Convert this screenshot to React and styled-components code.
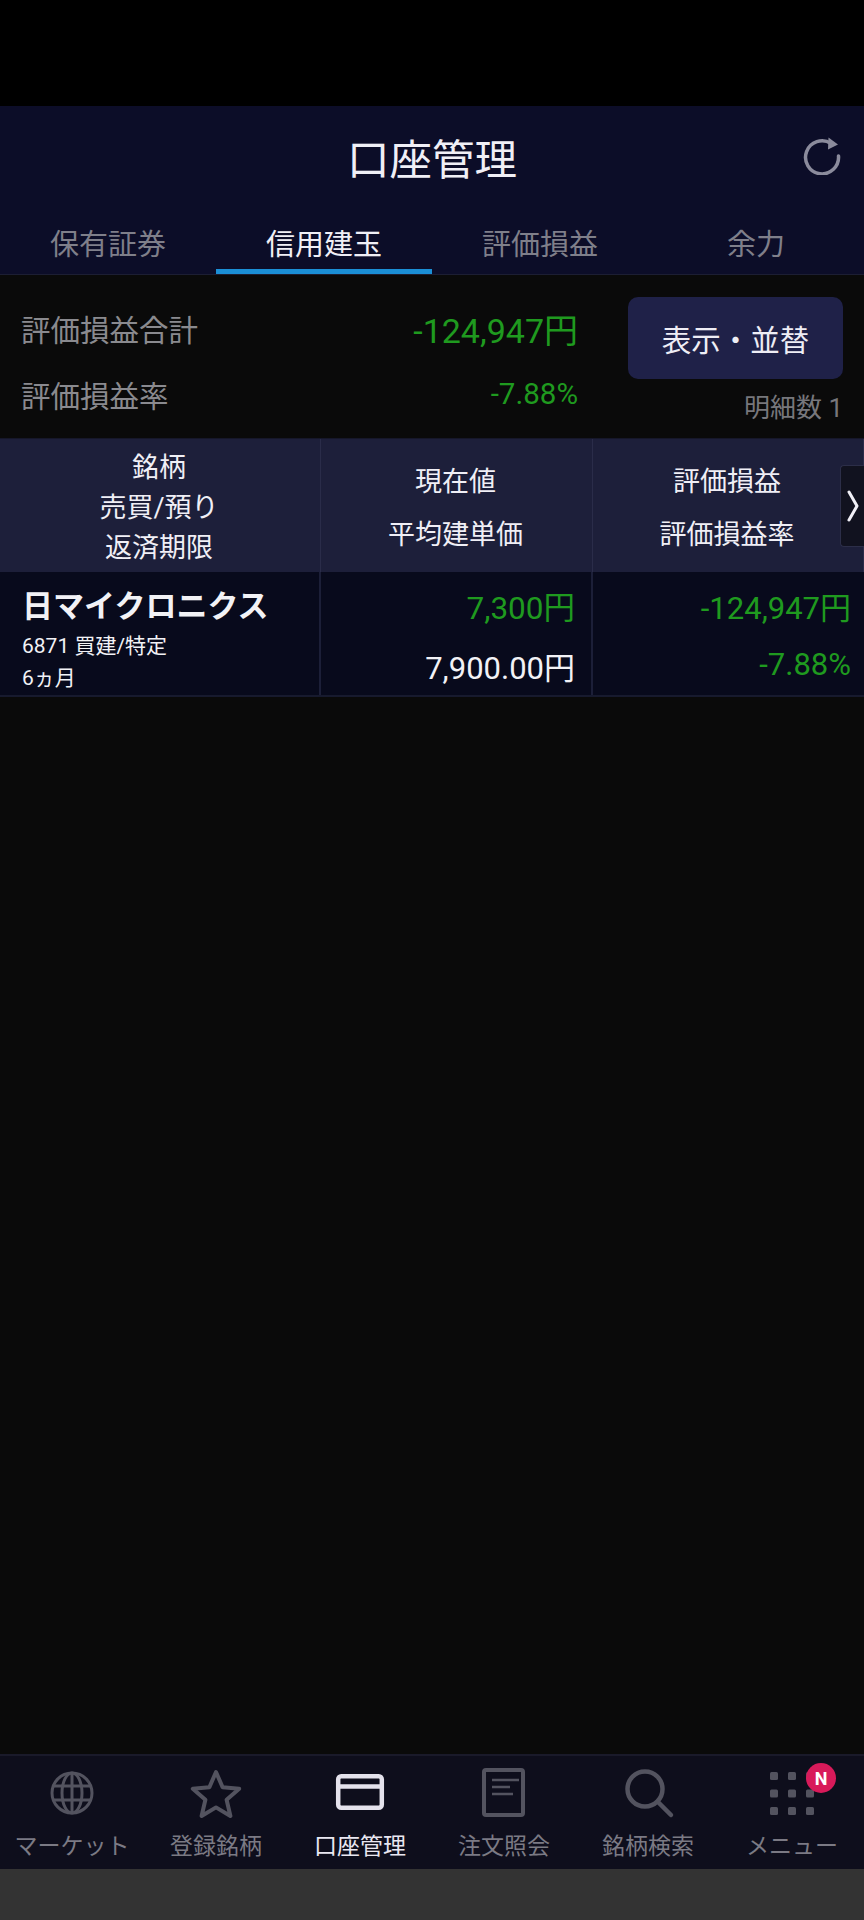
import React from "react";
import styled, { createGlobalStyle } from "styled-components";

const GlobalStyle = createGlobalStyle`
  html, body {
    margin: 0;
    padding: 0;
    background: #000;
  }
  body {
    font-family: Roboto, "Noto Sans CJK JP", sans-serif;
  }
`;

const Page = styled.div`
  width: 864px;
  height: 1920px;
  display: flex;
  flex-direction: column;
  background: #0a0a0a;
  overflow: hidden;
`;

const StatusBar = styled.div`
  height: 106px;
  flex: none;
  background: #000;
`;

const Header = styled.header`
  flex: none;
  height: 169px;
  box-sizing: border-box;
  background: #0c0d28;
  border-bottom: 1px solid #1c1e33;
  display: flex;
  flex-direction: column;
`;

const TitleRow = styled.div`
  position: relative;
  height: 105px;
  display: flex;
  align-items: center;
  justify-content: center;
`;

const Title = styled.h1`
  margin: 0 0 4px;
  font-size: 42.5px;
  font-weight: 400;
  color: #f0eff6;
`;

const Refresh = styled.svg`
  position: absolute;
  right: 22px;
  top: 29px;
  width: 40px;
  height: 40px;
`;

const Tabs = styled.nav`
  flex: 1;
  display: grid;
  grid-template-columns: repeat(4, 216px);
`;

const Tab = styled.div`
  display: flex;
  align-items: center;
  justify-content: center;
  padding-top: 3px;
  font-size: 29px;
  color: ${(p) => (p.$active ? "#f0eff6" : "#7f7f8a")};
  border-bottom: 5px solid ${(p) => (p.$active ? "#1b8fd6" : "transparent")};
`;

const Summary = styled.section`
  flex: none;
  height: 163px;
  box-sizing: border-box;
  padding: 22px 21px 0 21px;
  display: grid;
  grid-template-columns: 557px 215px;
  column-gap: 50px;
`;

const SummaryLines = styled.div`
  display: flex;
  flex-direction: column;
  gap: 18px;
  padding-top: 7px;
`;

const SummaryLine = styled.div`
  height: 48px;
  display: flex;
  align-items: center;
  justify-content: space-between;
`;

const SummaryLabel = styled.span`
  font-size: 29.5px;
  color: #8a8a8f;
`;

const Value = styled.span`
  font-size: ${(p) => p.$size}px;
  color: ${(p) => p.$color || "#1f9a1f"};
`;

const SummarySide = styled.div`
  display: flex;
  flex-direction: column;
  align-items: flex-end;
`;

const DisplayButton = styled.button`
  width: 215px;
  height: 82px;
  border: 0;
  border-radius: 10px;
  background: #1f2148;
  color: #eeedf5;
  font-family: inherit;
  font-size: 29.5px;
`;

const DetailCount = styled.div`
  margin-top: 8px;
  font-size: 26px;
  color: #77777c;
`;

const TableHead = styled.div`
  position: relative;
  flex: none;
  height: 134px;
  display: grid;
  grid-template-columns: 321px 272px 1fr;
  background: #1d1f3a;
  border-top: 1px solid #16172a;
  box-sizing: border-box;
`;

const HeadCell = styled.div`
  display: flex;
  flex-direction: column;
  align-items: center;
  justify-content: center;
  gap: ${(p) => p.$gap || 0}px;
  padding: ${(p) => (p.$gap ? "6px 2px 0 0" : "4px 2px 0 0")};
  border-right: 1px solid #2a2c49;
  font-size: 27px;
  line-height: 40px;
  color: #f0eff6;
  &:last-of-type {
    border-right: 0;
  }
`;

const ScrollTab = styled.div`
  position: absolute;
  right: 0;
  top: 26px;
  width: 23px;
  height: 80px;
  background: #11121f;
  border: 1px solid #2c2e48;
  border-right: 0;
  border-radius: 4px 0 0 4px;
  display: flex;
  align-items: center;
  justify-content: center;
`;

const Row = styled.div`
  flex: none;
  height: 125px;
  box-sizing: border-box;
  display: grid;
  grid-template-columns: 321px 272px 1fr;
  background: #080a1c;
  border-bottom: 2px solid #171a2e;
`;

const NameCell = styled.div`
  padding: 12px 0 0 22px;
  border-right: 2px solid #1c1f38;
  color: #f2f2f6;
`;

const StockName = styled.div`
  font-size: 31px;
  font-weight: 700;
  line-height: 46px;
`;

const StockMeta = styled.div`
  font-size: 21px;
  line-height: 32px;
`;

const ValueCell = styled.div`
  display: flex;
  flex-direction: column;
  align-items: flex-end;
  justify-content: space-between;
  padding: ${(p) => p.$pad};
  border-right: ${(p) => (p.$last ? "0" : "2px solid #1c1f38")};
`;

const Spacer = styled.div`
  flex: 1;
`;

const BottomNav = styled.nav`
  flex: none;
  height: 115px;
  box-sizing: border-box;
  display: grid;
  grid-template-columns: repeat(6, 144px);
  background: #0e0e1c;
  border-top: 2px solid #1a1a2a;
`;

const NavItem = styled.div`
  position: relative;
  display: flex;
  flex-direction: column;
  align-items: center;
  color: ${(p) => (p.$active ? "#e9e7f1" : "#7b7a84")};
`;

const NavIcon = styled.svg`
  width: 60px;
  height: 60px;
  margin-top: 7px;
`;

const NavLabel = styled.span`
  margin-top: 8px;
  font-size: 23px;
  line-height: 32px;
`;

const Badge = styled.span`
  position: absolute;
  top: 7px;
  left: 86px;
  width: 30px;
  height: 30px;
  border-radius: 50%;
  background: #d81a5a;
  color: #fff;
  font-size: 18px;
  font-weight: 700;
  display: flex;
  align-items: center;
  justify-content: center;
`;

const SystemBar = styled.div`
  flex: none;
  height: 51px;
  background: #333333;
`;

const iconColor = "#53535f";

const GlobeIcon = () => (
  <NavIcon viewBox="0 0 60 60" fill="none" stroke={iconColor} strokeWidth="3">
    <circle cx="30" cy="30" r="20" />
    <ellipse cx="30" cy="30" rx="10" ry="20" />
    <path d="M30 10v40M11 23h38M11 37h38" />
  </NavIcon>
);

const StarIcon = () => (
  <NavIcon viewBox="0 0 60 60" fill="none" stroke={iconColor} strokeWidth="4" strokeLinejoin="round">
    <path d="M30 9l6.6 15.2 16.6 1.6-12.6 10.9 3.8 16.3L30 44.4l-14.4 8.6 3.8-16.3L6.8 25.8l16.6-1.6z" />
  </NavIcon>
);

const CardIcon = () => (
  <NavIcon viewBox="0 0 60 60" fill="none" stroke="#e4e2ec" strokeWidth="4.5">
    <rect x="8.2" y="13.2" width="43.6" height="31.6" rx="3" />
    <path d="M8 23.5h44" />
  </NavIcon>
);

const OrderIcon = () => (
  <NavIcon viewBox="0 0 60 60" fill="none" stroke={iconColor}>
    <rect x="10" y="7" width="39" height="45" rx="2" strokeWidth="4" />
    <path d="M18 17h27M18 24h18M18 31h21" strokeWidth="2.5" />
  </NavIcon>
);

const SearchIcon = () => (
  <NavIcon viewBox="0 0 60 60" fill="none" stroke={iconColor} strokeWidth="4.5" strokeLinecap="round">
    <circle cx="27" cy="26" r="17.5" />
    <path d="M40 39l13 13" />
  </NavIcon>
);

const MenuIcon = () => (
  <NavIcon viewBox="0 0 60 60" fill={iconColor}>
    {[9, 26.5, 44].flatMap((y) =>
      [8, 26, 44].map((x) => <rect key={`${x}-${y}`} x={x} y={y} width="8" height="8" rx="1.5" />)
    )}
  </NavIcon>
);

const navItems = [
  { label: "マーケット", Icon: GlobeIcon },
  { label: "登録銘柄", Icon: StarIcon },
  { label: "口座管理", Icon: CardIcon, active: true },
  { label: "注文照会", Icon: OrderIcon },
  { label: "銘柄検索", Icon: SearchIcon },
  { label: "メニュー", Icon: MenuIcon, badge: "N" },
];

const tabs = ["保有証券", "信用建玉", "評価損益", "余力"];

export default function App() {
  return (
    <>
      <GlobalStyle />
      <Page>
        <StatusBar />
        <Header>
          <TitleRow>
            <Title>口座管理</Title>
            <Refresh viewBox="0 0 40 40" fill="none">
              <path d="M29 8.5A16.5 16.5 0 1 0 36.5 21" stroke="#8b8b9c" strokeWidth="3.5" strokeLinecap="round" />
              <path d="M26.5 2.5L36 9.5l-10 5z" fill="#8b8b9c" />
            </Refresh>
          </TitleRow>
          <Tabs>
            {tabs.map((t) => (
              <Tab key={t} $active={t === "信用建玉"}>
                {t}
              </Tab>
            ))}
          </Tabs>
        </Header>

        <Summary>
          <SummaryLines>
            <SummaryLine>
              <SummaryLabel>評価損益合計</SummaryLabel>
              <Value $size={34}>-124,947円</Value>
            </SummaryLine>
            <SummaryLine>
              <SummaryLabel>評価損益率</SummaryLabel>
              <Value $size={29.5}>-7.88%</Value>
            </SummaryLine>
          </SummaryLines>
          <SummarySide>
            <DisplayButton>表示・並替</DisplayButton>
            <DetailCount>明細数 1</DetailCount>
          </SummarySide>
        </Summary>

        <TableHead>
          <HeadCell>
            <span>銘柄</span>
            <span>売買/預り</span>
            <span>返済期限</span>
          </HeadCell>
          <HeadCell $gap={13}>
            <span>現在値</span>
            <span>平均建単価</span>
          </HeadCell>
          <HeadCell $gap={13}>
            <span>評価損益</span>
            <span>評価損益率</span>
          </HeadCell>
          <ScrollTab>
            <svg width="12" height="32" viewBox="0 0 12 32" fill="none">
              <path d="M2 2l8 14-8 14" stroke="#f0eff6" strokeWidth="3" strokeLinecap="round" strokeLinejoin="round" />
            </svg>
          </ScrollTab>
        </TableHead>

        <Row>
          <NameCell>
            <StockName>日マイクロニクス</StockName>
            <StockMeta>6871 買建/特定</StockMeta>
            <StockMeta>6ヵ月</StockMeta>
          </NameCell>
          <ValueCell $pad="10px 16px 7px 0">
            <Value $size={31.5}>7,300円</Value>
            <Value $size={31} $color="#f2f2f6">7,900.00円</Value>
          </ValueCell>
          <ValueCell $last $pad="11px 13px 12px 0">
            <Value $size={31}>-124,947円</Value>
            <Value $size={31}>-7.88%</Value>
          </ValueCell>
        </Row>

        <Spacer />

        <BottomNav>
          {navItems.map(({ label, Icon, active, badge }) => (
            <NavItem key={label} $active={active}>
              <Icon />
              <NavLabel>{label}</NavLabel>
              {badge && <Badge>{badge}</Badge>}
            </NavItem>
          ))}
        </BottomNav>
        <SystemBar />
      </Page>
    </>
  );
}
